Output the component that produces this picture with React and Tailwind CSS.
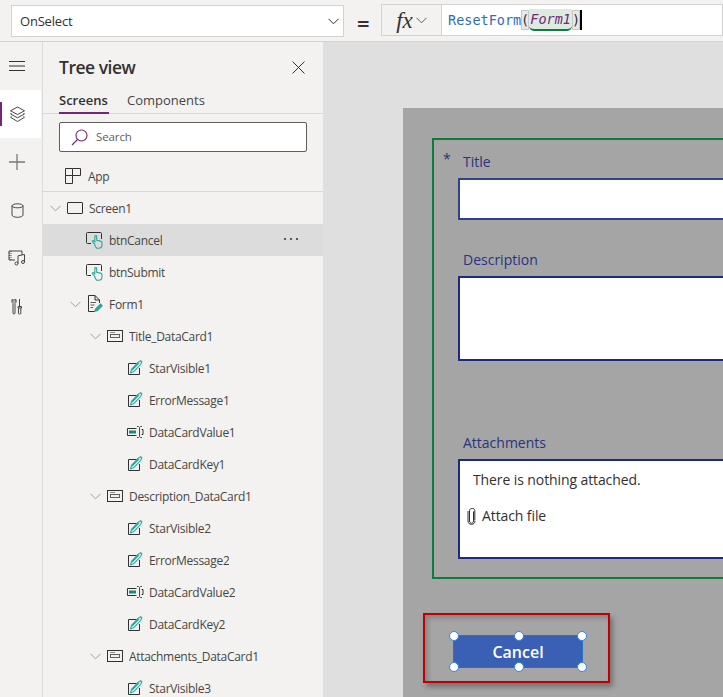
import React from 'react';

const FONT = 'font-["Open_Sans",sans-serif]';

const TREE = [
  { name: 'Screen1', level: 0, icon: 'screen', open: true },
  { name: 'btnCancel', level: 1, icon: 'button', selected: true },
  { name: 'btnSubmit', level: 1, icon: 'button' },
  { name: 'Form1', level: 1, icon: 'form', open: true },
  { name: 'Title_DataCard1', level: 2, icon: 'card', open: true },
  { name: 'StarVisible1', level: 3, icon: 'label' },
  { name: 'ErrorMessage1', level: 3, icon: 'label' },
  { name: 'DataCardValue1', level: 3, icon: 'input' },
  { name: 'DataCardKey1', level: 3, icon: 'label' },
  { name: 'Description_DataCard1', level: 2, icon: 'card', open: true },
  { name: 'StarVisible2', level: 3, icon: 'label' },
  { name: 'ErrorMessage2', level: 3, icon: 'label' },
  { name: 'DataCardValue2', level: 3, icon: 'input' },
  { name: 'DataCardKey2', level: 3, icon: 'label' },
  { name: 'Attachments_DataCard1', level: 2, icon: 'card', open: true },
  { name: 'StarVisible3', level: 3, icon: 'label' },
];

const INDENT = ['pl-[2px]', 'pl-[22px]', 'pl-[42px]', 'pl-[62px]'];

function Chevron({ className = '', color = '#a19f9d' }) {
  return (
    <svg width="11" height="7" viewBox="0 0 11 7" className={className}>
      <path d="M.5 .8 5.5 5.8 10.5 .8" fill="none" stroke={color} strokeWidth="1" />
    </svg>
  );
}

function TreeIcon({ type }) {
  const dark = '#323130';
  const teal = '#2aa6a0';
  if (type === 'screen') {
    return (
      <svg width="20" height="14" viewBox="0 0 20 14">
        <rect x="2.5" y="1.5" width="15" height="11" rx=".5" fill="none" stroke={dark} />
      </svg>
    );
  }
  if (type === 'card') {
    return (
      <svg width="20" height="14" viewBox="0 0 20 14">
        <rect x="2.5" y="1.5" width="15" height="11" fill="none" stroke={dark} />
        <rect x="5.5" y="5.5" width="9" height="3" fill="none" stroke="#605e5c" />
        <path d="M5 3.5H10" stroke="#8a8886" />
      </svg>
    );
  }
  if (type === 'button') {
    return (
      <svg width="20" height="18" viewBox="0 0 20 18">
        <path d="M6 12.5H2.5A1 1 0 0 1 1.5 11.5V2.5A1 1 0 0 1 2.5 1.5H15.5A1 1 0 0 1 16.5 2.5V8" fill="none" stroke={dark} />
        <path d="M9.5 13 7.5 10.8C7 10 8 9.2 8.7 9.8L9.8 10.8V5.5C9.8 4.3 11.7 4.3 11.7 5.5V9.3L15.5 10.1C16.5 10.3 17 11 17 12V14C17 16 15.5 17.3 13.5 17.3H12.5C11 17.3 10.5 16.3 9.5 13Z" fill="none" stroke={teal} strokeWidth="1.1" />
      </svg>
    );
  }
  if (type === 'form') {
    return (
      <svg width="20" height="18" viewBox="0 0 20 18">
        <path d="M10 16.5H3.5V.5H10L14.5 5V8M10 .5V5H14.5" fill="none" stroke={dark} />
        <path d="M5.5 7.5H11M5.5 10H9.5M5.5 12.5H8" stroke="#605e5c" />
        <path d="M9 17 10 13.8 15.5 8.3 18 10.8 12.5 16.2Z" fill={teal} />
      </svg>
    );
  }
  if (type === 'input') {
    return (
      <svg width="20" height="14" viewBox="0 0 20 14">
        <path d="M11.5 3.5H2.5V10.5H11.5" fill="none" stroke={dark} />
        <rect x="4" y="5.5" width="7" height="3" fill="#0f8a84" />
        <path d="M12 1.500H13.5L14.5 2.5 15.5 1.5H17M14.5 2.5V11.5M12 12.5H13.5L14.5 11.5 15.5 12.5H17" fill="none" stroke="#484644" />
        <path d="M16.500 4.500H18V9.500H16.500" fill="none" stroke={dark} />
      </svg>
    );
  }
  return (
    <svg width="20" height="16" viewBox="0 0 20 16">
      <path d="M13.5 3.5H3.5V14.5H14.5V8" fill="none" stroke={dark} />
      <path d="M5.5 12.8 6.5 9.3 13 2.5 15.8 .8 16.8 1.8 15.5 4.8 8.8 11.5Z" fill="#fff" stroke={teal} strokeWidth="1.1" />
      <path d="M7 10 14 3" stroke={teal} strokeWidth="1.5" />
    </svg>
  );
}

function TreeRow({ item }) {
  return (
    <div className={`flex h-8 shrink-0 items-center ${INDENT[item.level]} ${item.selected ? 'bg-[#dcdcdc]' : ''}`}>
      <span className="flex w-5 shrink-0 justify-center">{item.open && <Chevron />}</span>
      <span className="flex w-5 shrink-0 justify-center">
        <TreeIcon type={item.icon} />
      </span>
      <span className="ml-[4px] truncate pt-[2px] text-[12px] tracking-[-0.3px] text-[#484644]">{item.name}</span>
      {item.selected && (
        <span className="mb-[2px] ml-auto mr-[25px] flex gap-[4px]">
          <i className="size-[2px] rounded-full bg-[#323130]" />
          <i className="size-[2px] rounded-full bg-[#323130]" />
          <i className="size-[2px] rounded-full bg-[#323130]" />
        </span>
      )}
    </div>
  );
}

function RailButton({ children, active }) {
  return (
    <div className={`relative flex h-12 w-[41px] items-center justify-center ${active ? 'bg-white' : ''}`}>
      {active && <span className="absolute left-0 top-3 h-6 w-[2px] bg-[#742774]" />}
      {children}
    </div>
  );
}

function Rail() {
  const c = '#484644';
  return (
    <div className="flex w-[43px] shrink-0 flex-col border-r border-[#dcdcdc]">
      <RailButton>
        <svg width="18" height="12" viewBox="0 0 18 12" className="ml-[-7px]">
          <path d="M1 1.5H17M1 6H17M1 10.5H17" stroke="#323130" />
        </svg>
      </RailButton>
      <RailButton active>
        <svg width="17" height="17" viewBox="0 0 17 17" className="ml-[-7px]">
          <path d="M8.5 1 15.5 4.8 8.5 8.5 1.5 4.8Z" fill="none" stroke={c} />
          <path d="M2.5 7 1.5 8 8.5 11.8 15.5 8 14.5 7" fill="none" stroke={c} />
          <path d="M2.5 10.3 1.5 11.3 8.5 15.5 15.5 11.3 14.5 10.3" fill="none" stroke={c} />
        </svg>
      </RailButton>
      <RailButton>
        <svg width="18" height="18" viewBox="0 0 18 18" className="ml-[-7px]">
          <path d="M9 1V17M1 9H17" stroke="#777" strokeWidth="1.3" />
        </svg>
      </RailButton>
      <RailButton>
        <svg width="13" height="15" viewBox="0 0 13 15" className="ml-[-7px]">
          <ellipse cx="6.5" cy="2.8" rx="5.5" ry="2" fill="none" stroke={c} />
          <path d="M1 2.8V12C1 13.3 3.5 14.3 6.5 14.3S12 13.3 12 12V2.8" fill="none" stroke={c} />
        </svg>
      </RailButton>
      <RailButton>
        <svg width="18" height="16" viewBox="0 0 18 16" className="ml-[-7px]">
          <path d="M14 5V1H1V10H7" fill="none" stroke={c} />
          <path d="M3 1V10M1 3H3M1 5.5H3M1 8H3" fill="none" stroke={c} strokeDasharray="1 1" />
          <path d="M10 13.5V5.8L16.5 4.5V12" fill="none" stroke={c} />
          <circle cx="8.5" cy="13.5" r="1.5" fill="none" stroke={c} />
          <circle cx="15" cy="12" r="1.5" fill="none" stroke={c} />
        </svg>
      </RailButton>
      <RailButton>
        <svg width="12" height="17" viewBox="0 0 12 17" className="ml-[-7px]">
          <path d="M2 1V3.5L3 4.5 4 3.5V1M1.5 1C.5 2.5 .5 4 2 5.5V15C2 16.3 4 16.3 4 15V5.5C5.5 4 5.5 2.5 4.5 1" fill="none" stroke={c} />
          <path d="M8.5 1V8M7 8.5H10.5V10H7ZM7.5 10V15.5C7.5 16.3 9.8 16.3 9.8 15.5V10" fill="none" stroke={c} />
        </svg>
      </RailButton>
    </div>
  );
}

function TreePanel() {
  return (
    <div className="flex w-[280px] shrink-0 flex-col overflow-hidden bg-[#f3f2f1]">
      <div className="flex h-[50px] shrink-0 items-center justify-between pl-4 pr-[18px]">
        <span className="text-[17.5px] font-semibold tracking-[-0.5px] text-[#323130]">Tree view</span>
        <svg width="13" height="13" viewBox="0 0 13 13">
          <path d="M.5 .5 12.5 12.5M12.5 .5 .5 12.5" stroke="#323130" />
        </svg>
      </div>
      <div className="flex h-[22px] shrink-0 gap-[18px] border-b border-[#d8d8d8] pl-4">
        <span className="h-[22px] w-[50px] border-b-2 border-[#742774] text-[13px] font-semibold leading-[17px] text-[#323130]">Screens</span>
        <span className="text-[13px] leading-[17px] text-[#484644]">Components</span>
      </div>
      <div className="mx-4 mt-2 flex h-[30px] shrink-0 items-center rounded-[2px] border border-[#605e5c] bg-white pl-[11px]">
        <svg width="17" height="17" viewBox="0 0 17 17">
          <circle cx="10.5" cy="6.5" r="5.5" fill="none" stroke="#742774" strokeWidth="1.1" />
          <path d="M6.5 10.5 1 16" stroke="#742774" strokeWidth="1.1" />
        </svg>
        <span className="ml-2 text-[11.5px] tracking-[-0.1px] text-[#605e5c]">Search</span>
      </div>
      <div className="mt-2 flex h-8 shrink-0 items-center border-b border-[#d8d8d8] pl-[22px]">
        <svg width="16" height="16" viewBox="0 0 16 16">
          <path d="M.5 .5V15.5H7.5V.5ZM7.5 .5H15.5V7.5H.5" fill="none" stroke="#323130" />
        </svg>
        <span className="ml-[7px] pt-[2px] text-[12px] tracking-[-0.3px] text-[#484644]">App</span>
      </div>
      {TREE.map((item) => (
        <TreeRow key={item.name} item={item} />
      ))}
    </div>
  );
}

function Handle({ className }) {
  return <span className={`absolute size-[10px] rounded-full border border-[#2f88d8] bg-white ${className}`} />;
}

function FormCanvas() {
  return (
    <div className="min-w-0 flex-1 overflow-hidden bg-[#dfdfdf] pl-[80px] pt-[66px]">
      <div className="h-[600px] w-[500px] bg-[#a5a5a5] pl-[29px] pt-[30px]">
        <div className="h-[441px] w-[420px] border-2 border-[#0f7b3a] pl-[24px] text-[#27337f]">
          <div className="relative h-[38px]">
            <span className="absolute left-[-15px] top-[9px] text-[14px] leading-[20px]">*</span>
            <span className="absolute left-[5px] top-[12px] text-[14px] leading-[20px]">Title</span>
          </div>
          <div className="h-[42px] border-2 border-[#2f4090] bg-white" />
          <div className="flex h-[56px] items-end pb-[6px] pl-[5px] text-[14px] leading-[20px]">Description</div>
          <div className="h-[85px] border-2 border-[#1c2a86] bg-white" />
          <div className="flex h-[98px] items-end pb-[6px] pl-[5px] text-[14px] leading-[20px]">Attachments</div>
          <div className="h-[100px] border-2 border-[#1c2a86] bg-white pl-[13px] pt-[9px] text-[#323130]">
            <div className="text-[14px] leading-[20px] tracking-[-0.1px]">There is nothing attached.</div>
            <div className="ml-[-6px] mt-4 flex items-center gap-[6px] text-[14px] leading-[20px] tracking-[-0.1px]">
              <svg width="9" height="18" viewBox="0 0 9 18">
                <path d="M6.5 4.5V14C6.5 17 2.5 17 2.5 14V3.5C2.5 1 7.8 .5 7.8 3.5V13.5M2.5 4V13.5M1 4V14C1 18.5 8 18.5 8 14" fill="none" stroke="#323130" strokeWidth="1" />
              </svg>
              Attach file
            </div>
          </div>
        </div>
        <div className="ml-[-9px] mt-[34px] h-[70px] w-[187px] border-2 border-[#c00000] pl-[28px] pt-[20px] shadow-[3px_4px_5px_rgba(0,0,0,0.3),inset_3px_3px_5px_rgba(0,0,0,0.2)]">
          <div className="relative flex h-[33px] w-[130px] items-center justify-center border border-[#2672c8] bg-[#3a60b5] text-[16px] font-semibold text-white">
            Cancel
            <Handle className="left-[-5px] top-[-5px]" />
            <Handle className="left-[60px] top-[-5px]" />
            <Handle className="right-[-5px] top-[-5px]" />
            <Handle className="bottom-[-5px] left-[-5px]" />
            <Handle className="bottom-[-5px] left-[60px]" />
            <Handle className="bottom-[-5px] right-[-5px]" />
          </div>
        </div>
      </div>
    </div>
  );
}

function FormulaBar() {
  return (
    <div className="flex h-[42px] shrink-0 items-start border-b border-[#d2d2d2] bg-[#f3f2f1] pl-[11px] pt-[4px]">
      <div className="mt-px flex h-[32px] w-[333px] items-center justify-between border border-[#d2d2d2] bg-white pl-[8px] pr-[3px]">
        <span className="pt-[2px] text-[13px] tracking-[-0.2px] text-[#323130]">OnSelect</span>
        <Chevron className="mr-[1px]" color="#323130" />
      </div>
      <span className="w-[37px] pl-[13px] pt-[2px] text-[22px] font-semibold leading-[34px] text-[#323130]">=</span>
      <div className="flex h-[32px] w-[61px] items-center justify-center gap-[3px] border border-[#d2d2d2] bg-[#f3f2f1]">
        <span className="font-['Liberation_Serif',serif] text-[23px] italic leading-none text-[#323130]">fx</span>
        <Chevron color="#605e5c" />
      </div>
      <div className="flex h-[32px] flex-1 items-center border border-l-0 border-[#d2d2d2] bg-white pl-[6px] font-['DejaVu_Sans_Mono',monospace] text-[13.5px] text-[#2f6db5]">
        <span>ResetForm</span>
        <span className="flex h-[20px] w-2 items-center justify-center border border-[#c8c8c8] bg-[#e8e8e8] text-[#323130]">(</span>
        <span className="mt-[4px] flex h-[22px] w-[43px] items-center justify-center self-start rounded-b-[5px] border-b-2 border-[#107c41] bg-[#dcebe0] italic text-[#742774]">Form1</span>
        <span className="flex h-[20px] w-2 items-center justify-center border border-[#c8c8c8] bg-[#e8e8e8] text-[#323130]">)</span>
        <span className="h-[20px] w-[2px] bg-black" />
      </div>
    </div>
  );
}

export default function App() {
  return (
    <div className={`flex h-[697px] w-[723px] flex-col overflow-hidden bg-[#f3f2f1] ${FONT}`}>
      <FormulaBar />
      <div className="flex min-h-0 flex-1">
        <Rail />
        <TreePanel />
        <FormCanvas />
      </div>
    </div>
  );
}
